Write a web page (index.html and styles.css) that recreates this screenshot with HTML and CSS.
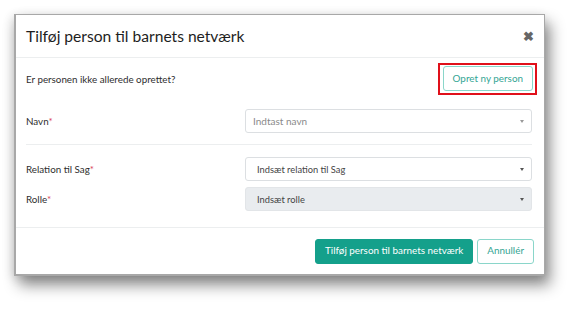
FILE: index.html
```html
<!DOCTYPE html>
<html lang="da">
<head>
<meta charset="utf-8">
<link rel="stylesheet" href="styles.css">
</head>
<body>
<div class="page">
  <div class="dialog">
    <div class="header">
      <h1 class="title">Tilføj person til barnets netværk</h1>
      <span class="close">&#x2716;</span>
    </div>
    <div class="body">
      <div class="row row-top">
        <span class="text">Er personen ikke allerede oprettet?</span>
        <span class="highlight"><button class="btn btn-outline">Opret ny person</button></span>
      </div>
      <div class="row row-field">
        <label class="label">Navn<span class="req">*</span></label>
        <div class="select placeholder"><span>Indtast navn</span><i class="caret"></i></div>
      </div>
      <div class="divider"></div>
      <div class="row row-field">
        <label class="label">Relation til Sag<span class="req">*</span></label>
        <div class="select small"><span>Indsæt relation til Sag</span><i class="caret dark"></i></div>
      </div>
      <div class="row row-field row-tight">
        <label class="label">Rolle<span class="req">*</span></label>
        <div class="select small disabled"><span>Indsæt rolle</span><i class="caret dark"></i></div>
      </div>
    </div>
    <div class="footer">
      <button class="btn btn-primary">Tilføj person til barnets netværk</button>
      <button class="btn btn-outline">Annullér</button>
    </div>
  </div>
</div>
</body>
</html>
```
FILE: styles.css
```css
* { box-sizing: border-box; }
html, body { margin: 0; padding: 0; background: #fff; }
body {
  width: 579px;
  height: 312px;
  overflow: hidden;
  font-family: "Segoe UI", Lato, "Open Sans", sans-serif;
  color: #333;
}
.page {
  padding: 14px 0 0 14px;
}
.dialog {
  width: 531px;
  height: 262px;
  background: #fff;
  border: 1px solid #a8a8a8;
  border-left-width: 2px;
  border-bottom-width: 2px;
  box-shadow: 5px 9px 14px rgba(0,0,0,0.45), -2px 2px 10px rgba(0,0,0,0.12);
  display: flex;
  flex-direction: column;
}
.header {
  height: 43px;
  border-bottom: 1px solid #eceeef;
  display: flex;
  align-items: center;
  justify-content: space-between;
  padding: 0 10px 0 10px;
}
.title {
  margin: 0;
  font-size: 15.6px;
  font-weight: 400;
  color: #1e1e1e;
}
.close {
  font-size: 13px;
  color: #666;
  font-weight: bold;
  line-height: 1;
  margin-top: 1px;
}
.body {
  padding: 9px 10px 0 10px;
  height: 170px;
  border-bottom: 1px solid #eceeef;
}
.row {
  display: flex;
  align-items: center;
}
.row-top {
  justify-content: space-between;
  height: 30px;
  margin-top: -3px;
}
.text, .label {
  font-size: 9.8px;
  color: #2e2e2e;
}
.highlight {
  border: 2px solid #e0101a;
  padding: 1px 2px 2px 3px;
  margin-right: -3px;
}
.row-field {
  margin-top: 15px;
}
.row-tight { margin-top: 6px; }
.label {
  width: 219px;
}
.req { color: #d9435a; }
.select {
  width: 287px;
  height: 24px;
  border: 1px solid #dcdfe2;
  border-radius: 3px;
  display: flex;
  align-items: center;
  justify-content: space-between;
  padding: 0 7px 0 7px;
  font-size: 10px;
  color: #555;
}
.select.placeholder { color: #8a8a8a; }
.select.small { font-size: 9.3px; padding-left: 11px; color: #444; }
.select.disabled { background: #e9ecef; border-color: #e2e5e8; }
.caret {
  width: 0;
  height: 0;
  border-left: 2.5px solid transparent;
  border-right: 2.5px solid transparent;
  border-top: 3.5px solid #999;
}
.caret.dark { border-top-color: #555; }
.divider {
  height: 1px;
  background: #eceeef;
  margin-top: 11px;
  margin-bottom: -3px;
  width: 506px;
}
.footer {
  flex: 1;
  display: flex;
  justify-content: flex-end;
  align-items: center;
  gap: 4px;
  padding: 0 10px 0 0;
}
.btn {
  font-family: inherit;
  font-size: 9.9px;
  height: 25px;
  border-radius: 3px;
  padding: 0 9px;
  cursor: pointer;
  line-height: 1;
}
.btn-outline {
  background: #fff;
  border: 1px solid #8ad6ca;
  color: #33a593;
}
.btn-primary {
  background: #14a08b;
  border: 1px solid #14a08b;
  color: #fff;
}
```
